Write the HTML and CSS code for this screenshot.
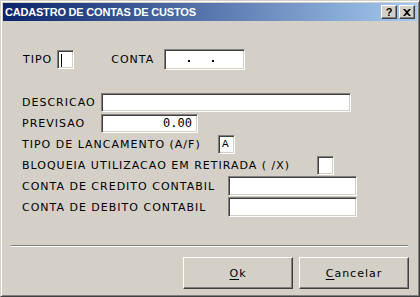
FILE: index.html
```html
<!DOCTYPE html>
<html>
<head>
<meta charset="utf-8">
<link rel="stylesheet" href="styles.css">
</head>
<body>
<div class="window">
  <div class="titlebar">
    <span class="title">CADASTRO DE CONTAS DE CUSTOS</span>
    <div class="tbtns">
      <span class="tbtn">?</span>
      <span class="tbtn x">
        <svg width="8" height="7" viewBox="0 0 8 7"><path d="M0 0h2l2 2 2-2h2L5 3.5 8 7H6L4 5 2 7H0l3-3.5z" fill="#000"/></svg>
      </span>
    </div>
  </div>
  <div class="client">
    <div class="row1">
      <span class="lbl">TIPO</span>
      <span class="field tipo"><span class="caret"></span></span>
      <span class="lbl conta-lbl">CONTA</span>
      <span class="field conta"><span class="dot"></span><span class="dot"></span></span>
    </div>
    <div class="form">
      <div class="frow"><span class="lbl w1">DESCRICAO</span><span class="field desc"></span></div>
      <div class="frow"><span class="lbl w1">PREVISAO</span><span class="field prev">0.00</span></div>
      <div class="frow"><span class="lbl w2">TIPO DE LANCAMENTO (A/F)</span><span class="field small mono">A</span></div>
      <div class="frow"><span class="lbl w3">BLOQUEIA UTILIZACAO EM RETIRADA ( /X)</span><span class="field small"></span></div>
      <div class="frow"><span class="lbl w4">CONTA DE CREDITO CONTABIL</span><span class="field cc"></span></div>
      <div class="frow"><span class="lbl w4">CONTA DE DEBITO CONTABIL</span><span class="field cc"></span></div>
    </div>
    <div class="sep"></div>
    <div class="buttons">
      <button class="btn"><u>O</u>k</button>
      <button class="btn"><u>C</u>ancelar</button>
    </div>
  </div>
</div>
</body>
</html>
```
FILE: styles.css
```css
html, body { margin: 0; padding: 0; background: #d4d0c8; }
body { width: 420px; height: 297px; overflow: hidden; }
.window {
  box-sizing: border-box;
  width: 420px; height: 297px;
  background: #d4d0c8;
  border-top: 1px solid #d4d0c8; border-left: 1px solid #d4d0c8;
  border-right: 1px solid #404040; border-bottom: 1px solid #404040;
  box-shadow: inset 1px 1px #fff, inset -1px -1px #808080;
  padding: 2px;
  display: flex; flex-direction: column;
}
.titlebar {
  height: 18px;
  background: linear-gradient(to right, #0a246a, #a6caf0);
  display: flex; align-items: center; justify-content: space-between;
  padding: 0 2px 0 2px;
}
.title {
  color: #fff; font-family: "Liberation Sans", sans-serif; font-weight: bold;
  font-size: 11px; letter-spacing: -0.2px;
}
.tbtns { display: flex; gap: 2px; }
.tbtn {
  box-sizing: border-box; width: 16px; height: 14px;
  background: #d4d0c8;
  border-top: 1px solid #fff; border-left: 1px solid #fff;
  border-right: 1px solid #404040; border-bottom: 1px solid #404040;
  box-shadow: inset -1px -1px #808080;
  font-family: "Liberation Sans", sans-serif; font-weight: bold; font-size: 11px;
  line-height: 12px; text-align: center; color: #000;
  display: flex; align-items: center; justify-content: center;
}
.client {
  flex: 1; position: relative;
  font-family: "DejaVu Sans", sans-serif; font-size: 11px; letter-spacing: 1px; color: #000;
}
.lbl { white-space: nowrap; }
.field {
  box-sizing: border-box; display: inline-block; background: #fff;
  border-top: 1px solid #808080; border-left: 1px solid #808080;
  border-right: 1px solid #fff; border-bottom: 1px solid #fff;
  box-shadow: inset 1px 1px #404040, inset -1px -1px #d4d0c8;
}
.row1 {
  display: flex; align-items: center;
  margin-top: 28px; padding-left: 20px; height: 21px;
}
.tipo { width: 17px; height: 19px; margin-left: 5px; position: relative; }
.caret { position: absolute; left: 3px; top: 3px; width: 1px; height: 13px; background: #000; }
.conta-lbl { margin-left: 37px; }
.conta {
  width: 81px; height: 21px; margin-left: 10px;
  display: inline-flex; align-items: center; padding-left: 23px; gap: 22px;
}
.dot { width: 2px; height: 2px; background: #000; margin-top: 2px; }
.form { margin-top: 22px; padding-left: 19px; display: flex; flex-direction: column; }
.frow { display: flex; align-items: center; height: 20px; }
.frow + .frow { margin-top: 1px; }
.w1 { width: 79px; }
.w2 { width: 196px; }
.w3 { width: 295px; }
.w4 { width: 206px; }
.desc { width: 250px; height: 19px; }
.prev {
  width: 97px; height: 19px; text-align: right; padding-right: 5px;
  font-family: "DejaVu Sans Mono", monospace; font-size: 12px; letter-spacing: 0; line-height: 17px;
}
.small { width: 17px; height: 19px; }
.mono {
  font-family: "Liberation Mono", monospace; font-size: 11px; letter-spacing: 0;
  line-height: 17px; padding-left: 3px;
}
.cc { width: 129px; height: 20px; }
.sep {
  margin: 28px 9px 0 8px; height: 0;
  border-top: 1px solid #808080; border-bottom: 1px solid #fff;
}
.buttons { display: flex; justify-content: flex-end; gap: 6px; margin-top: 10px; padding-right: 8px; }
.btn {
  box-sizing: border-box; width: 110px; height: 32px;
  background: #d4d0c8; margin: 0; padding: 0;
  border-top: 1px solid #fff; border-left: 1px solid #fff;
  border-right: 1px solid #404040; border-bottom: 1px solid #404040;
  box-shadow: inset -1px -1px #808080;
  font-family: "DejaVu Sans", sans-serif; font-size: 11px; letter-spacing: 1px; color: #000;
}
.btn u { text-decoration-thickness: 1px; text-underline-offset: 2px; }
```
